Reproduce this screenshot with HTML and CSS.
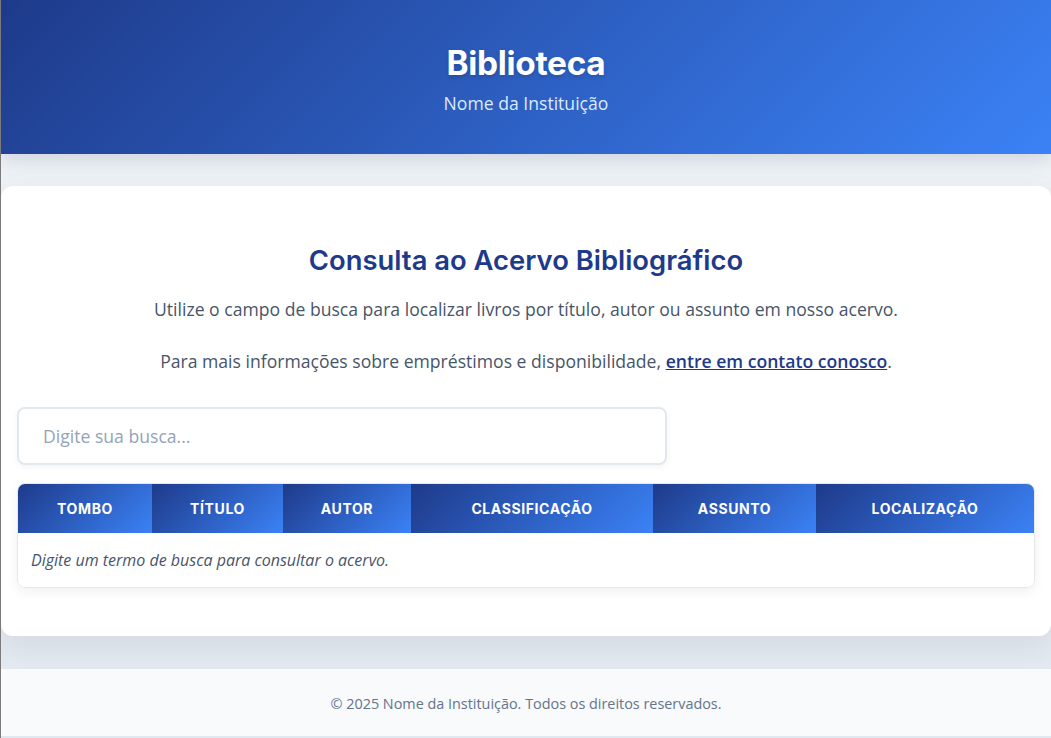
FILE: index.html
```html
<!DOCTYPE html>
<html lang="pt-BR">
<head>
<meta charset="utf-8">
<title>Biblioteca</title>
<link rel="stylesheet" href="styles.css">
</head>
<body>
<header class="site-header">
  <h1 class="site-title">Biblioteca</h1>
  <p class="site-subtitle">Nome da Instituição</p>
</header>
<main class="main">
  <section class="card">
    <h2 class="card-title">Consulta ao Acervo Bibliográfico</h2>
    <p class="intro">Utilize o campo de busca para localizar livros por título, autor ou assunto em nosso acervo.</p>
    <p class="intro">Para mais informações sobre empréstimos e disponibilidade, <a class="contact-link" href="#">entre em contato conosco</a>.</p>
    <div class="search">
      <input class="search-input" type="text" placeholder="Digite sua busca...">
    </div>
    <div class="table-wrap">
      <table class="results">
        <thead>
          <tr>
            <th class="col-tombo">Tombo</th>
            <th class="col-titulo">Título</th>
            <th class="col-autor">Autor</th>
            <th class="col-class">Classificação</th>
            <th class="col-assunto">Assunto</th>
            <th class="col-local">Localização</th>
          </tr>
        </thead>
        <tbody>
          <tr>
            <td class="empty" colspan="6">Digite um termo de busca para consultar o acervo.</td>
          </tr>
        </tbody>
      </table>
    </div>
  </section>
</main>
<footer class="site-footer">
  <p>© 2025 Nome da Instituição. Todos os direitos reservados.</p>
</footer>
</body>
</html>
```

FILE: styles.css
```css
* { box-sizing: border-box; }

html, body { margin: 0; padding: 0; }

body {
  font-family: "Open Sans", "Noto Sans", sans-serif;
  color: #334155;
  background: linear-gradient(180deg, #f1f5f9 0%, #e2e8f0 100%);
  border-left: 1px solid #7b7b7b;
  min-height: 738px;
}

.site-header {
  height: 154px;
  background: linear-gradient(135deg, #1e3a8a 0%, #3b82f6 100%);
  color: #fff;
  text-align: center;
  padding-top: 40px;
  box-shadow: 0 4px 20px rgba(15, 23, 42, 0.15);
  position: relative;
}

.site-title {
  margin: 0;
  font-family: "Inter", sans-serif;
  font-weight: 700;
  font-size: 33.4px;
  line-height: 46px;
  letter-spacing: -0.3px;
  text-shadow: 0 2px 4px rgba(0,0,0,0.15);
}

.site-subtitle {
  margin: 4px 0 0;
  font-size: 17.6px;
  line-height: 26px;
  color: #dbeafe;
}

.main {
  padding: 32px 0;
}

.card {
  background: #fff;
  border-radius: 12px;
  padding: 52px 16px 48px;
  box-shadow: 0 10px 30px rgba(15, 23, 42, 0.08);
}

.card-title {
  margin: 0 0 14px;
  text-align: center;
  font-family: "Inter", sans-serif;
  font-weight: 600;
  font-size: 27.4px;
  line-height: 44px;
  color: #1e3a8a;
}

.intro {
  margin: 0 0 26px;
  text-align: center;
  font-size: 17.6px;
  line-height: 26px;
  color: #475569;
}

.contact-link {
  color: #1e3a8a;
  font-weight: 600;
  text-decoration: underline;
}

.search {
  margin-top: 33px;
  margin-bottom: 18px;
}

.search-input {
  display: block;
  width: 650px;
  height: 58px;
  border: 2px solid #e2e8f0;
  border-radius: 8px;
  padding: 0 24px;
  font-family: "Open Sans", sans-serif;
  font-size: 17.6px;
  color: #334155;
  background: #fff;
  box-shadow: 0 2px 6px rgba(15, 23, 42, 0.05);
  outline: none;
}

.search-input::placeholder { color: #94a3b8; }

.table-wrap {
  border-radius: 8px;
  overflow: hidden;
  border: 1px solid #e5e7eb;
  box-shadow: 0 4px 12px rgba(15, 23, 42, 0.06);
}

.results {
  width: 100%;
  border-collapse: collapse;
  table-layout: fixed;
}

.results th {
  height: 49px;
  padding: 0 12px;
  background: linear-gradient(135deg, #1e3a8a 0%, #3b82f6 100%);
  color: #fff;
  font-family: "Inter", sans-serif;
  font-weight: 700;
  font-size: 14px;
  letter-spacing: 0.6px;
  text-transform: uppercase;
  text-align: center;
}

.col-tombo { width: 134px; }
.col-titulo { width: 131px; }
.col-autor { width: 128px; }
.col-class { width: 242px; }
.col-assunto { width: 163px; }
.col-local { width: auto; }

.results td.empty {
  height: 54px;
  padding: 0 13px;
  font-style: italic;
  font-size: 16px;
  color: #475569;
  background: #fff;
}

.site-footer {
  background: #f8fafc;
  border-top: 1px solid #e2e8f0;
  text-align: center;
  height: 68px;
  padding-top: 25px;
}

.site-footer p {
  margin: 0;
  font-size: 14.4px;
  line-height: 20px;
  color: #64748b;
}
```
